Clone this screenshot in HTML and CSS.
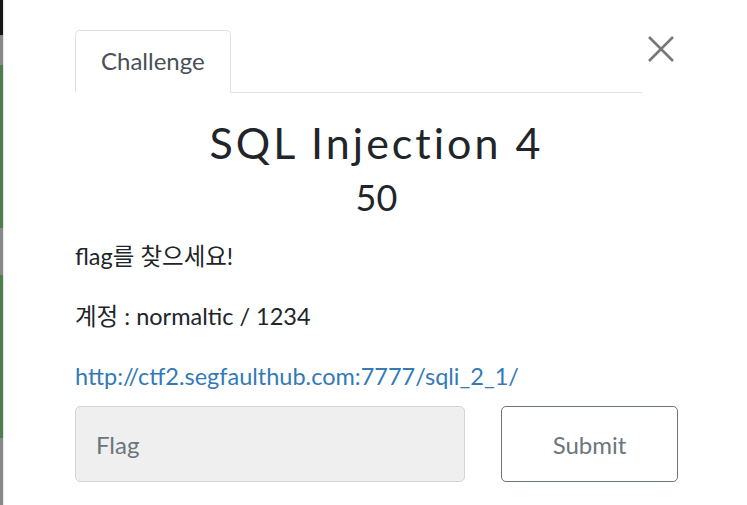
FILE: index.html
```html
<!DOCTYPE html>
<html lang="ko">
<head>
  <meta charset="UTF-8">
  <title>SQL Injection 4</title>
  <link rel="stylesheet" href="styles.css">
</head>
<body>
  <div class="backdrop">
    <span class="bar dark"></span>
    <span class="bar gray" style="height:30px"></span>
    <span class="bar green" style="height:163px"></span>
    <span class="bar gray" style="height:47px"></span>
    <span class="bar green" style="height:163px"></span>
    <span class="bar gray" style="height:67px"></span>
  </div>

  <div class="modal">
    <div class="modal-head">
      <ul class="tabs">
        <li class="tab active">Challenge</li>
      </ul>
      <button class="close" aria-label="Close">
        <svg width="26" height="26" viewBox="0 0 26 26">
          <path d="M1 1 L25 25 M25 1 L1 25" stroke="#777" stroke-width="2.6" fill="none"/>
        </svg>
      </button>
    </div>

    <h3 class="challenge-name">SQL Injection 4</h3>
    <h4 class="challenge-value">50</h4>

    <div class="challenge-desc">
      <p>flag를 찾으세요!</p>
      <p>계정 : normaltic / 1234</p>
      <p><a href="#">http://ctf2.segfaulthub.com:7777/sqli_2_1/</a></p>
    </div>

    <form class="submit-row">
      <input type="text" class="flag-input" placeholder="Flag">
      <button type="button" class="submit-btn">Submit</button>
    </form>
  </div>
</body>
</html>
```

FILE: styles.css
```css
html, body {
  margin: 0;
  padding: 0;
  height: 100%;
}
body {
  display: flex;
  font-family: Lato, "Noto Sans CJK KR", sans-serif;
  color: #212529;
  background: #fff;
  overflow: hidden;
}
.backdrop {
  width: 3px;
  display: flex;
  flex-direction: column;
  border-right: 1px solid #e6e6e6;
}
.bar {
  display: block;
}
.bar.dark {
  height: 35px;
  background: #151515;
}
.bar.gray {
  background: #888;
}
.bar.green {
  background: #4c7f4c;
}
.modal {
  flex: 1;
  padding: 30px 69px 0 71px;
}
.modal-head {
  display: flex;
  align-items: flex-start;
}
.tabs {
  flex: 1;
  list-style: none;
  margin: 0;
  padding: 0;
  display: flex;
  border-bottom: 1px solid #dee2e6;
}
.tab {
  font-size: 24px;
  color: #495057;
  padding: 16px 25px 17px;
  line-height: 28px;
  margin-bottom: -1px;
}
.tab.active {
  border: 1px solid #dee2e6;
  border-bottom-color: #fff;
  border-radius: 5px 5px 0 0;
  background: #fff;
}
.close {
  border: none;
  background: none;
  padding: 0;
  margin: 6px 4px 0 6px;
  width: 26px;
  height: 26px;
  cursor: pointer;
}
.close svg {
  display: block;
}
.challenge-name {
  text-align: center;
  font-weight: 400;
  font-size: 43px;
  letter-spacing: 3px;
  line-height: 52px;
  margin: 24px 0 0;
}
.challenge-value {
  text-align: center;
  font-weight: 400;
  font-size: 36px;
  line-height: 42px;
  margin: 7px 0 0;
}
.challenge-desc {
  font-size: 23.5px;
  line-height: 36px;
  margin-top: 20px;
}
.challenge-desc p {
  margin: 0 0 24px;
}
.challenge-desc a {
  color: #337ab7;
  text-decoration: none;
}
.submit-row {
  display: flex;
  gap: 36px;
  margin-top: -12px;
}
.flag-input {
  flex: 1;
  height: 76px;
  box-sizing: border-box;
  border: 1px solid #ced4da;
  border-radius: 5px;
  background: #efefef;
  padding: 0 20px;
  font-family: inherit;
  font-size: 24px;
  color: #495057;
}
.flag-input::placeholder {
  color: #6c757d;
}
.submit-btn {
  width: 177px;
  height: 76px;
  border: 1px solid #6c757d;
  border-radius: 5px;
  background: #fff;
  color: #6c757d;
  font-family: inherit;
  font-size: 24px;
  cursor: pointer;
}
```
